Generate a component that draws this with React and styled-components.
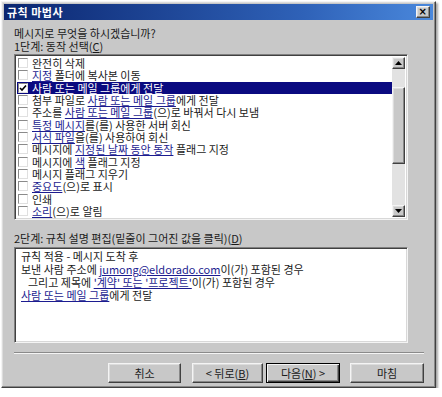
import React from "react";
import styled, { createGlobalStyle, css } from "styled-components";

const GlobalStyle = createGlobalStyle`
  html, body {
    margin: 0;
    padding: 0;
    background: #ffffff;
  }
  body {
    font-family: "Noto Sans CJK KR", "Noto Sans", sans-serif;
    font-size: 11px;
    color: #1a1a1a;
  }
`;

const raised = css`
  border: 1px solid;
  border-color: #f4f4f4 #404040 #404040 #f4f4f4;
  box-shadow: inset -1px -1px 0 #888888, inset 1px 1px 0 #dcdcdc;
`;

const sunken = css`
  border: 1px solid;
  border-color: #808080 #f4f4f4 #f4f4f4 #808080;
  box-shadow: inset 1px 1px 0 #404040, inset -1px -1px 0 #d8d8d8;
`;

const Dialog = styled.div`
  width: 435px;
  height: 387px;
  margin: 1px 0 0 1px;
  box-sizing: border-box;
  background: #c8c8c8;
  ${raised};
  box-shadow: inset -1px -1px 0 #888888, inset 1px 1px 0 #dcdcdc,
    2px 2px 2px rgba(0, 0, 0, 0.35);
  padding: 2px;
  display: flex;
  flex-direction: column;
`;

const TitleBar = styled.div`
  height: 16px;
  display: flex;
  align-items: center;
  justify-content: space-between;
  padding: 0 3px 0 3px;
  background: linear-gradient(to right, #0b2670, #2f62b8 70%, #4a88dc);
  color: #ffffff;
  font-weight: bold;
  font-size: 11px;
  letter-spacing: 0.5px;
`;

const CloseButton = styled.div`
  width: 12px;
  height: 10px;
  background: #c8c8c8;
  ${raised};
  display: flex;
  align-items: center;
  justify-content: center;
  color: #000;
  font-size: 10px;
  line-height: 1;
  font-family: "DejaVu Sans", sans-serif;
  font-weight: bold;
`;

const Body = styled.div`
  padding: 7px 10px 0 10px;
  display: flex;
  flex-direction: column;
`;

const Label = styled.div`
  line-height: 13px;
  height: 13px;
  white-space: nowrap;
  margin-top: ${({ $top }) => $top || 0}px;
`;

const Mnemonic = styled.span`
  text-decoration: underline;
`;

const ListBox = styled.div`
  width: 394px;
  height: 166px;
  box-sizing: border-box;
  margin-top: 1px;
  background: #ffffff;
  ${sunken};
  display: flex;
  padding: 2px;
`;

const Rows = styled.div`
  flex: 1;
  display: flex;
  flex-direction: column;
`;

const Row = styled.div`
  height: 12.5px;
  display: flex;
  align-items: center;
  gap: 4px;
  padding-left: 1px;
  white-space: nowrap;
  line-height: 12px;
  ${({ $selected }) =>
    $selected &&
    css`
      background: #0a0a80;
      color: #ffffff;
      margin-right: 0;
    `}
`;

const Check = styled.span`
  width: 10px;
  height: 10px;
  flex: none;
  box-sizing: border-box;
  background: #ffffff;
  border: 1px solid;
  border-color: #8a8a8a #e0e0e0 #e0e0e0 #8a8a8a;
  display: flex;
  align-items: center;
  justify-content: center;
`;

const Link = styled.span`
  color: ${({ $light }) => ($light ? "#ffffff" : "#1c1c90")};
  text-decoration: underline;
  text-underline-offset: 1px;
`;

const ScrollBar = styled.div`
  width: 13px;
  display: flex;
  flex-direction: column;
  background: #e2e2e2;
`;

const ArrowButton = styled.div`
  height: 12px;
  box-sizing: border-box;
  background: #c8c8c8;
  ${raised};
  display: flex;
  align-items: center;
  justify-content: center;
`;

const Track = styled.div`
  height: ${({ $h }) => $h}px;
  background: #e2e2e2;
`;

const Thumb = styled.div`
  height: 78px;
  box-sizing: border-box;
  background: #c8c8c8;
  ${raised};
`;

const DescBox = styled.div`
  width: 394px;
  height: 96px;
  box-sizing: border-box;
  margin-top: 2px;
  background: #ffffff;
  ${sunken};
  padding: 2px 6px;
`;

const DescLine = styled.div`
  line-height: 13px;
  height: 13px;
  white-space: nowrap;
  padding-left: ${({ $indent }) => ($indent ? 7 : 0)}px;
`;

const Separator = styled.div`
  width: 410px;
  margin-top: 9px;
  border-top: 1px solid #8a8a8a;
  border-bottom: 1px solid #f4f4f4;
`;

const ButtonRow = styled.div`
  width: 410px;
  display: flex;
  justify-content: flex-end;
  margin-top: 9px;
`;

const Button = styled.button`
  width: ${({ $w }) => $w || 73}px;
  height: 20px;
  margin-left: ${({ $gap }) => $gap || 0}px;
  box-sizing: border-box;
  background: #c8c8c8;
  font-family: inherit;
  font-size: 11px;
  color: #1a1a1a;
  padding: 0;
  ${raised};
  ${({ $default }) =>
    $default &&
    css`
      border: 1px solid #000000;
      box-shadow: inset 1px 1px 0 #f4f4f4, inset -1px -1px 0 #404040,
        inset -2px -2px 0 #888888;
    `}
`;

const Arrow = ({ up }) => (
  <svg width="7" height="4" viewBox="0 0 7 4">
    <path d={up ? "M3.5 0 L7 4 L0 4 Z" : "M0 0 L7 0 L3.5 4 Z"} fill="#000" />
  </svg>
);

const Tick = () => (
  <svg width="8" height="8" viewBox="0 0 8 8">
    <path d="M1 4 L3 6 L7 1.5" stroke="#000" strokeWidth="1.6" fill="none" />
  </svg>
);

const actions = [
  ["완전히 삭제"],
  [["지정"], " 폴더에 복사본 이동"],
  [["사람 또는 메일 그룹"], "에게 전달"],
  ["첨부 파일로 ", ["사람 또는 메일 그룹"], "에게 전달"],
  ["주소를 ", ["사람 또는 메일 그룹"], "(으)로 바꿔서 다시 보냄"],
  [["특정 메시지"], "를(를) 사용한 서버 회신"],
  [["서식 파일"], "을(를) 사용하여 회신"],
  ["메시지에 ", ["지정된 날짜 동안 동작"], " 플래그 지정"],
  ["메시지에 ", ["색"], " 플래그 지정"],
  ["메시지 플래그 지우기"],
  [["중요도"], "(으)로 표시"],
  ["인쇄"],
  [["소리"], "(으)로 알림"],
];

const renderParts = (parts, light) =>
  parts.map((p, i) =>
    Array.isArray(p) ? (
      <Link key={i} $light={light}>
        {p[0]}
      </Link>
    ) : (
      <span key={i}>{p}</span>
    )
  );

export default function App() {
  return (
    <>
      <GlobalStyle />
      <Dialog>
        <TitleBar>
          <span>규칙 마법사</span>
          <CloseButton>×</CloseButton>
        </TitleBar>
        <Body>
          <Label>메시지로 무엇을 하시겠습니까?</Label>
          <Label>
            1단계: 동작 선택(<Mnemonic>C</Mnemonic>)
          </Label>
          <ListBox>
            <Rows>
              {actions.map((parts, i) => (
                <Row key={i} $selected={i === 2}>
                  <Check>{i === 2 && <Tick />}</Check>
                  <span>{renderParts(parts, i === 2)}</span>
                </Row>
              ))}
            </Rows>
            <ScrollBar>
              <ArrowButton>
                <Arrow up />
              </ArrowButton>
              <Track $h={18} />
              <Thumb />
              <Track $h={42} />
              <ArrowButton>
                <Arrow />
              </ArrowButton>
            </ScrollBar>
          </ListBox>
          <Label $top={12}>
            2단계: 규칙 설명 편집(밑줄이 그어진 값을 클릭)(<Mnemonic>D</Mnemonic>)
          </Label>
          <DescBox>
            <DescLine>규칙 적용 - 메시지 도착 후</DescLine>
            <DescLine>
              보낸 사람 주소에 <Link>jumong@eldorado.com</Link>이(가) 포함된 경우
            </DescLine>
            <DescLine $indent>
              그리고 제목에 <Link>'계약' 또는 '프로젝트'</Link>이(가) 포함된 경우
            </DescLine>
            <DescLine>
              <Link>사람 또는 메일 그룹</Link>에게 전달
            </DescLine>
          </DescBox>
          <Separator />
          <ButtonRow>
            <Button $w={73}>취소</Button>
            <Button $w={71} $gap={11}>
              &lt; 뒤로(<Mnemonic>B</Mnemonic>)
            </Button>
            <Button $w={74} $gap={3} $default>
              다음(<Mnemonic>N</Mnemonic>) &gt;
            </Button>
            <Button $w={74} $gap={10}>
              마침
            </Button>
          </ButtonRow>
        </Body>
      </Dialog>
    </>
  );
}
